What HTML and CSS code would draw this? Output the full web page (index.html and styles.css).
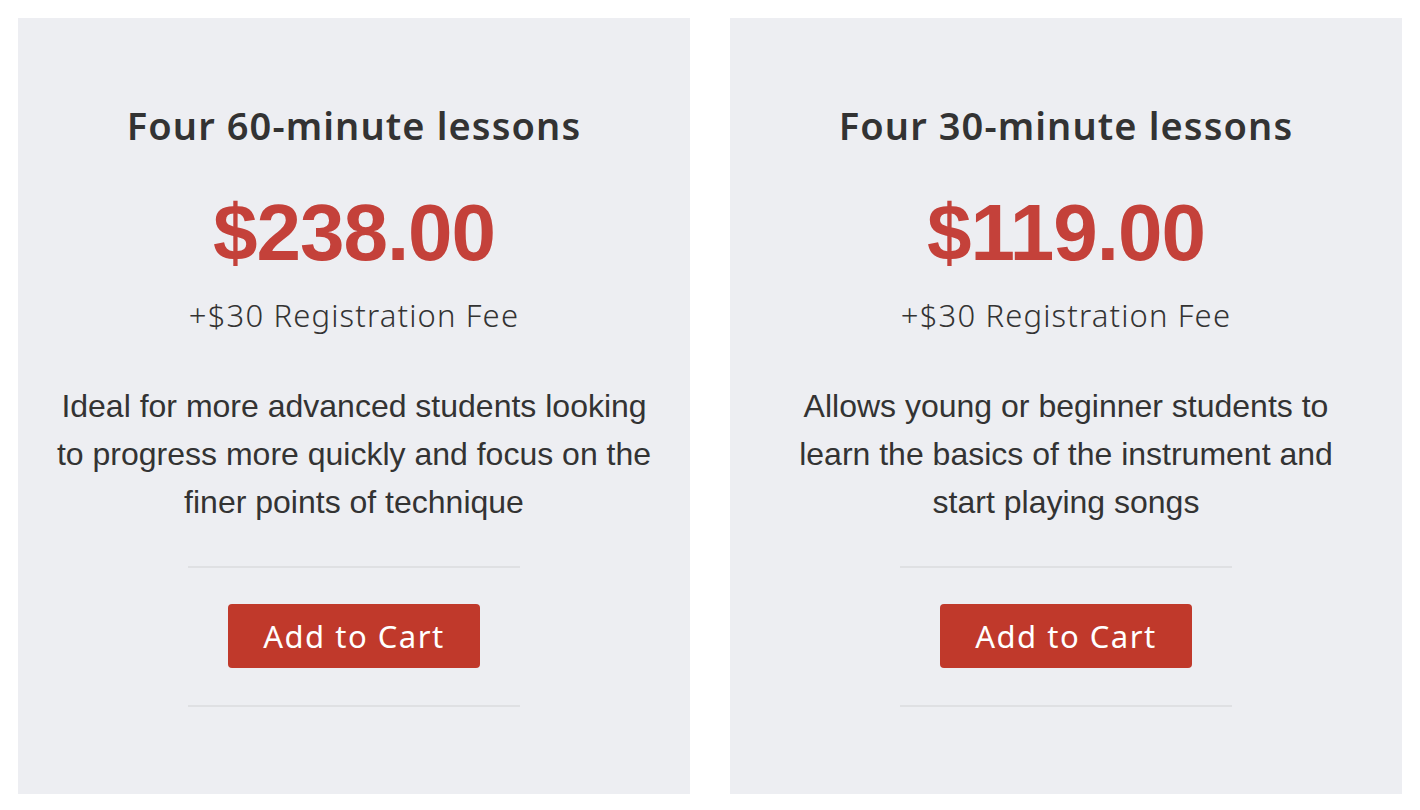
FILE: index.html
```html
<!DOCTYPE html>
<html lang="en">
<head>
    <meta charset="UTF-8">
    <title>Lesson Packages</title>
    <link rel="stylesheet" href="styles.css">
</head>
<body>
    <div class="plans">
        <div class="plan">
            <h2 class="plan-title">Four 60-minute lessons</h2>
            <div class="plan-price">$238.00</div>
            <div class="plan-fee">+$30 Registration Fee</div>
            <p class="plan-desc">Ideal for more advanced students looking to progress more quickly and focus on the finer points of technique</p>
            <div class="plan-cart">
                <a class="btn" href="#">Add to Cart</a>
            </div>
        </div>
        <div class="plan">
            <h2 class="plan-title">Four 30-minute lessons</h2>
            <div class="plan-price">$119.00</div>
            <div class="plan-fee">+$30 Registration Fee</div>
            <p class="plan-desc">Allows young or beginner students to learn the basics of the instrument and start playing songs</p>
            <div class="plan-cart">
                <a class="btn" href="#">Add to Cart</a>
            </div>
        </div>
    </div>
</body>
</html>
```

FILE: styles.css
```css
*{
    padding: 0;
    margin: 0;
    box-sizing: border-box;
}
body{
    background: #fff;
    color: #333;
    font-family: "Liberation Sans", Arial, sans-serif;
}
.plans{
    display: flex;
    gap: 40px;
    padding: 18px;
}
.plan{
    width: 672px;
    height: 776px;
    background-color: #edeef2;
    text-align: center;
    padding: 84px 36px 0;
}
.plan-title{
    font-family: "Noto Sans", sans-serif;
    font-weight: 600;
    font-size: 38px;
    line-height: 46px;
    letter-spacing: 1.1px;
    color: #333;
}
.plan-price{
    font-family: "Liberation Sans", Arial, sans-serif;
    font-weight: 700;
    font-size: 80px;
    line-height: 100px;
    letter-spacing: -1px;
    color: #c4413a;
    margin-top: 35px;
}
.plan-fee{
    font-family: "Noto Sans", sans-serif;
    font-weight: 300;
    font-size: 31px;
    line-height: 40px;
    letter-spacing: 1.15px;
    margin-top: 12px;
}
.plan-desc{
    font-size: 32px;
    line-height: 48px;
    margin-top: 47px;
}
.plan-cart{
    width: 332px;
    margin: 40px auto 0;
    padding: 36px 0 37px;
    border-top: 2px solid #dfe0e3;
    border-bottom: 2px solid #dfe0e3;
}
.btn{
    display: block;
    width: 252px;
    height: 64px;
    margin: 0 auto;
    line-height: 64px;
    background-color: #c0392b;
    color: #fff;
    border-radius: 4px;
    text-decoration: none;
    font-family: "Noto Sans", sans-serif;
    font-size: 31px;
    letter-spacing: 1.5px;
}
```
